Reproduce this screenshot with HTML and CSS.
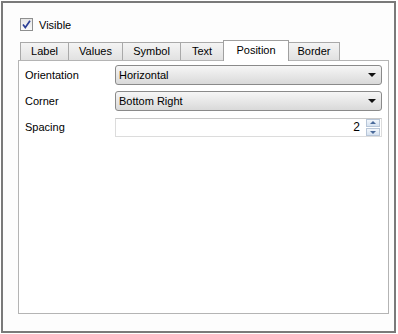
FILE: index.html
```html
<!DOCTYPE html>
<html lang="en">
<head>
    <meta charset="UTF-8">
    <title>Legend Properties</title>
    <link rel="stylesheet" href="styles.css">
</head>
<body>

<div class="window">
    <label class="check">
        <span class="box">
            <svg width="11" height="11" viewBox="0 0 11 11"><path d="M2 5.5 L4.3 8.5 L9 1.8" fill="none" stroke="#2b3f96" stroke-width="1.7"/></svg>
        </span>
        Visible
    </label>

    <div class="tabs">
        <div class="tab" style="width: 49px;">Label</div>
        <div class="tab" style="width: 55px;">Values</div>
        <div class="tab" style="width: 59px;">Symbol</div>
        <div class="tab" style="width: 44px;">Text</div>
        <div class="tab active" style="width: 66px;">Position</div>
        <div class="tab" style="width: 52px;">Border</div>
    </div>

    <div class="pane">
        <div class="row">
            <span class="name">Orientation</span>
            <div class="combo">Horizontal<span class="arrow"></span></div>
        </div>
        <div class="row">
            <span class="name">Corner</span>
            <div class="combo">Bottom Right<span class="arrow"></span></div>
        </div>
        <div class="row">
            <span class="name">Spacing</span>
            <div class="spin">
                <span class="value">2</span>
                <span class="buttons">
                    <span class="up"></span>
                    <span class="down"></span>
                </span>
            </div>
        </div>
    </div>
</div>

</body>
</html>
```

FILE: styles.css
```css
body {
    margin: 0;
    font-family: "Liberation Sans", Arial, sans-serif;
    font-size: 11px;
    color: #000;
    background: #fff;
}
.window {
    box-sizing: border-box;
    width: 395px;
    height: 332px;
    margin: 1px;
    border: 2px solid #7a7a7a;
    background: #fdfdfd;
    padding: 15px 4px 0 15px;
}
.check {
    display: flex;
    align-items: center;
    gap: 6px;
    height: 13px;
    padding-left: 2px;
}
.box {
    box-sizing: border-box;
    width: 13px;
    height: 13px;
    border: 1px solid #8e8f8f;
    background: linear-gradient(#e6e6e6, #fafafa);
    display: flex;
    align-items: center;
    justify-content: center;
}
.tabs {
    display: flex;
    align-items: flex-end;
    margin-top: 9px;
    padding-left: 2px;
    height: 20px;
}
.tab {
    box-sizing: border-box;
    height: 18px;
    border: 1px solid #a9a9a9;
    border-bottom: none;
    margin-right: -1px;
    background: linear-gradient(#f4f4f4, #e1e1e1);
    text-align: center;
    line-height: 17px;
}
.tab.active {
    height: 21px;
    margin-bottom: -1px;
    background: #fff;
    position: relative;
    z-index: 1;
    line-height: 19px;
    border-color: #a0a0a0;
}
.pane {
    box-sizing: border-box;
    width: 371px;
    height: 254px;
    border: 1px solid #b4b4b4;
    background: #fff;
    padding: 4px 6px 0 6px;
    display: flex;
    flex-direction: column;
    gap: 6px;
}
.row {
    display: flex;
    align-items: center;
    height: 20px;
}
.name {
    width: 90px;
}
.combo {
    box-sizing: border-box;
    position: relative;
    width: 267px;
    height: 20px;
    border: 1px solid #8a8a8a;
    border-radius: 3px;
    background: linear-gradient(#f6f6f6, #e8e8e8 50%, #d9d9d9);
    padding-left: 3px;
    line-height: 18px;
}
.arrow {
    position: absolute;
    right: 5px;
    top: 7px;
    width: 0;
    height: 0;
    border-left: 4px solid transparent;
    border-right: 4px solid transparent;
    border-top: 4px solid #111;
}
.spin {
    box-sizing: border-box;
    width: 267px;
    height: 19px;
    border: 1px solid #dcdcdc;
    border-top-color: #c8c8c8;
    background: #fff;
    display: flex;
    align-items: center;
    justify-content: flex-end;
    gap: 6px;
    padding-right: 1px;
}
.value {
    font-size: 12px;
}
.buttons {
    display: flex;
    flex-direction: column;
    gap: 1px;
}
.buttons span {
    position: relative;
    box-sizing: border-box;
    width: 14px;
    height: 8px;
    border: 1px solid #b8c6d8;
    background: linear-gradient(#f2f6fb, #d6e2f0);
}
.up::after, .down::after {
    content: "";
    position: absolute;
    left: 3px;
    border-left: 3px solid transparent;
    border-right: 3px solid transparent;
}
.up::after {
    top: 1px;
    border-bottom: 3px solid #4a6a9a;
}
.down::after {
    top: 2px;
    border-top: 3px solid #4a6a9a;
}
```
